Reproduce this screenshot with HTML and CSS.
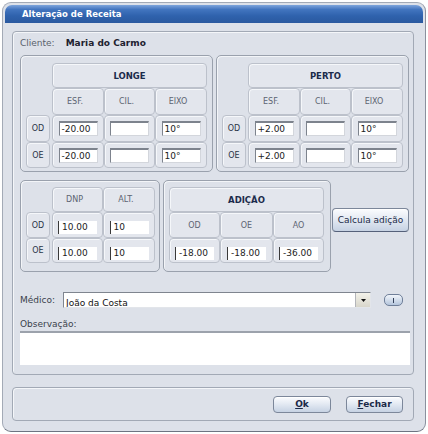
FILE: index.html
```html
<!DOCTYPE html>
<html lang="pt">
<head>
<meta charset="utf-8">
<title>Alteração de Receita</title>
<link rel="stylesheet" href="styles.css">
</head>
<body>
<div class="window">
  <div class="titlebar"><span>Alteração de Receita</span></div>
  <div class="panel">
    <div class="cliente"><span class="lbl">Cliente:</span><span class="name">Maria do Carmo</span></div>
    <div class="row-top">
      <div class="group vision">
        <div class="cell head vhead">LONGE</div>
        <div class="cell colh c2">ESF.</div>
        <div class="cell colh">CIL.</div>
        <div class="cell colh">EIXO</div>
        <div class="cell rowl">OD</div>
        <div class="cell"><div class="field">-20.00</div></div>
        <div class="cell"><div class="field"></div></div>
        <div class="cell"><div class="field">10°</div></div>
        <div class="cell rowl">OE</div>
        <div class="cell"><div class="field">-20.00</div></div>
        <div class="cell"><div class="field"></div></div>
        <div class="cell"><div class="field">10°</div></div>
      </div>
      <div class="group vision">
        <div class="cell head vhead">PERTO</div>
        <div class="cell colh c2">ESF.</div>
        <div class="cell colh">CIL.</div>
        <div class="cell colh">EIXO</div>
        <div class="cell rowl">OD</div>
        <div class="cell"><div class="field">+2.00</div></div>
        <div class="cell"><div class="field"></div></div>
        <div class="cell"><div class="field">10°</div></div>
        <div class="cell rowl">OE</div>
        <div class="cell"><div class="field">+2.00</div></div>
        <div class="cell"><div class="field"></div></div>
        <div class="cell"><div class="field">10°</div></div>
      </div>
    </div>
    <div class="row-low">
      <div class="group dnp">
        <div class="cell colh c2">DNP</div>
        <div class="cell colh">ALT.</div>
        <div class="cell rowl">OD</div>
        <div class="cell low"><div class="field flat">10.00</div></div>
        <div class="cell low"><div class="field flat">10</div></div>
        <div class="cell rowl">OE</div>
        <div class="cell low"><div class="field flat">10.00</div></div>
        <div class="cell low"><div class="field flat">10</div></div>
      </div>
      <div class="group adicao">
        <div class="cell head ahead">ADIÇÃO</div>
        <div class="cell colh">OD</div>
        <div class="cell colh">OE</div>
        <div class="cell colh">AO</div>
        <div class="cell low"><div class="field flat">-18.00</div></div>
        <div class="cell low"><div class="field flat">-18.00</div></div>
        <div class="cell low"><div class="field flat">-36.00</div></div>
      </div>
      <div class="btn calc">Calcula adição</div>
    </div>
    <div class="medico">
      <span class="mlabel">Médico:</span>
      <div class="select">
        <span class="seltext">João da Costa</span>
        <span class="dd"><svg width="5" height="3" viewBox="0 0 5 3"><path d="M0 0H5L2.5 3Z" fill="#111"/></svg></span>
      </div>
      <div class="pill"><span class="bar"></span></div>
    </div>
    <div class="obslabel">Observação:</div>
    <div class="textarea"></div>
  </div>
  <div class="footer">
    <div class="btn act ok"><span><u>O</u>k</span></div>
    <div class="btn act fechar"><span><u>F</u>echar</span></div>
  </div>
</div>
</body>
</html>
```

FILE: styles.css
```css
body {
  margin: 0;
  background: #ffffff;
  font-family: "DejaVu Sans", "Verdana", sans-serif;
  font-size: 9px;
  color: #1a1a1a;
}

.window {
  box-sizing: border-box;
  width: 424px;
  height: 430px;
  margin: 2px;
  border: 1px solid #a3aab6;
  border-right-color: #8a919e;
  border-bottom-color: #6d7482;
  border-radius: 9px;
  background: #dde1e9;
  padding: 2px;
}

.titlebar {
  height: 18px;
  border-radius: 7px 7px 0 0;
  background: linear-gradient(to bottom, #7ea5dc 0, #4275bf 25%, #2f62ad 60%, #2a599f 100%);
  color: #ffffff;
  font-weight: bold;
  font-size: 8.5px;
  padding-left: 17px;
  display: flex;
  align-items: center;
}

.panel {
  margin: 8px 9px 0 7px;
  border: 1px solid #a2a9b5;
  border-radius: 4px;
  box-shadow: inset 1px 1px 0 #f4f6f9;
  padding: 0 0 9px 7px;
}

.cliente {
  height: 22px;
  display: flex;
  align-items: center;
  gap: 11px;
}

.cliente .lbl {
  color: #5a616c;
}

.cliente .name {
  font-weight: bold;
  color: #1e2230;
}

.row-top {
  display: flex;
  gap: 3px;
  margin-top: 1px;
}

.group {
  box-sizing: border-box;
  border: 1px solid #9aa1ad;
  border-radius: 5px;
  box-shadow: inset 1px 1px 0 #f3f5f8;
  display: grid;
}

.vision {
  width: 193px;
  padding: 7px 5px 3px 5px;
  grid-template-columns: 26px 52px 51px 52px;
  grid-template-rows: 25px 27px 27px 26px;
}

.cell {
  border: 1px solid #bcc1cb;
  border-radius: 4px;
  background: #e3e6ed;
  box-shadow: inset 1px 1px 0 #f5f7fa;
  display: flex;
  align-items: center;
  justify-content: center;
}

.head {
  font-weight: bold;
  font-size: 8.5px;
  color: #1b2b4b;
}

.vhead {
  grid-column: 2 / span 3;
}

.ahead {
  grid-column: 1 / span 3;
}

.c2 {
  grid-column: 2;
}

.colh {
  font-size: 8px;
  color: #5c6472;
  padding-right: 6px;
}

.rowl {
  margin-right: 2px;
  font-size: 8px;
  color: #2a3347;
}

.field {
  box-sizing: border-box;
  width: 39px;
  height: 15px;
  background: #ffffff;
  border: 1px solid;
  border-color: #7d838d #d3d6dc #d3d6dc #7d838d;
  border-top-width: 2px;
  padding-left: 2px;
  line-height: 12px;
  color: #222222;
  white-space: nowrap;
}

.field.flat {
  height: 13px;
  border: none;
  border-left: 1px solid #3a3a3a;
  line-height: 13px;
  padding-left: 3px;
}

.cell.low {
  padding-top: 5px;
}

.row-low {
  display: flex;
  margin-top: 8px;
  align-items: flex-start;
}

.dnp {
  width: 140px;
  padding: 6px 4px 8px 5px;
  grid-template-columns: 26px 51px 52px;
  grid-template-rows: 25px 26px 25px;
}

.adicao {
  width: 168px;
  margin-left: 3px;
  padding: 6px 6px 8px 5px;
  grid-template-columns: 51px 53px 51px;
  grid-template-rows: 25px 26px 25px;
}

.adicao .colh {
  padding-right: 0;
}

.btn {
  box-sizing: border-box;
  border: 1px solid #7c879a;
  border-radius: 4px;
  background: linear-gradient(to bottom, #fbfcfe 0, #e4eaf3 45%, #c6d2e3 100%);
  box-shadow: inset 0 1px 0 #ffffff;
  display: flex;
  align-items: center;
  justify-content: center;
  color: #1c2a48;
}

.calc {
  margin-left: 1px;
  margin-top: 28px;
  width: 77px;
  height: 24px;
  border-bottom-color: #55617a;
}

.medico {
  display: flex;
  align-items: center;
  margin-top: 20px;
  height: 16px;
}

.mlabel {
  width: 43px;
  color: #3a414c;
}

.select {
  box-sizing: border-box;
  width: 308px;
  height: 16px;
  background: #ffffff;
  border: 1px solid;
  border-color: #7f858f #e2e5ea #e2e5ea #7f858f;
  display: flex;
  align-items: stretch;
  overflow: hidden;
}

.seltext {
  flex: 1;
  padding-left: 2px;
  line-height: 20px;
  color: #111111;
  overflow: hidden;
}

.dd {
  width: 14px;
  background: linear-gradient(to bottom, #f3f2ea, #d8d6cb);
  border-left: 1px solid #b3b5ba;
  display: flex;
  align-items: center;
  justify-content: center;
}

.pill {
  box-sizing: border-box;
  margin-left: 13px;
  width: 19px;
  height: 12px;
  border: 1px solid #6f7f99;
  border-radius: 5px;
  background: linear-gradient(to bottom, #f1f5fb, #b4c5dc);
  display: flex;
  align-items: center;
  justify-content: center;
}

.pill .bar {
  width: 1px;
  height: 5px;
  background: #34405a;
}

.obslabel {
  margin-top: 10px;
  height: 12px;
  line-height: 12px;
  color: #3a414c;
}

.textarea {
  box-sizing: border-box;
  margin-top: 1px;
  width: 390px;
  height: 34px;
  background: #ffffff;
  border-top: 2px solid #9ca2ac;
}

.footer {
  box-sizing: border-box;
  margin: 12px 9px 0 7px;
  height: 34px;
  border: 1px solid #a2a9b5;
  border-radius: 4px;
  box-shadow: inset 1px 1px 0 #f4f6f9;
  display: flex;
  justify-content: flex-end;
  align-items: center;
  gap: 15px;
  padding-right: 10px;
}

.act {
  height: 17px;
  font-weight: bold;
}

.ok {
  width: 58px;
}

.fechar {
  width: 57px;
}
```
